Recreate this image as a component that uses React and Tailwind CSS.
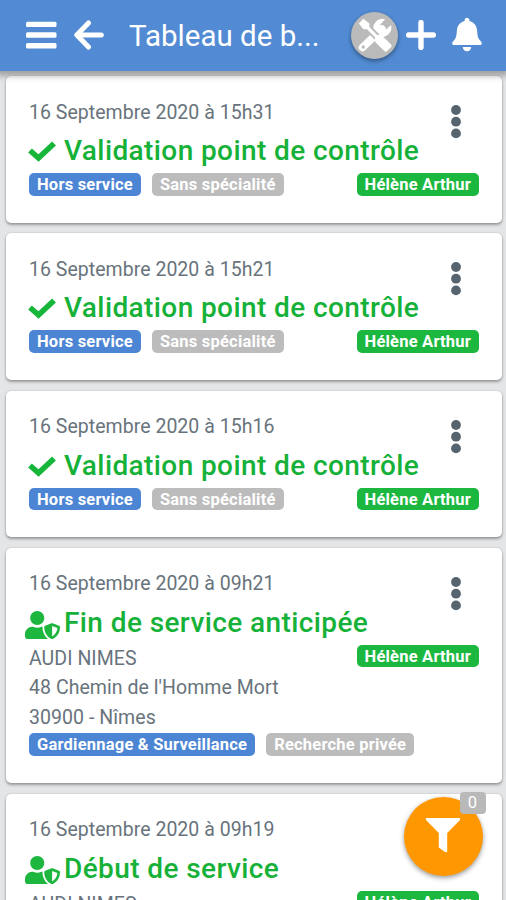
import React from "react";
import { FaUserShield } from "react-icons/fa";

function Badge({ color, children }) {
  return (
    <span className={`h-[22.5px] shrink-0 whitespace-nowrap rounded-[5px] px-2 text-[16.5px] leading-[23px] font-bold tracking-[0.21px] text-white ${color}`}>
      {children}
    </span>
  );
}

function Check() {
  return (
    <svg viewBox="0 0 28 21" className="mt-[1px] h-[21px] w-[28px]" fill="none">
      <path d="M2 9.5 10.5 17 26 2.5" stroke="#16b63a" strokeWidth="5.6" />
    </svg>
  );
}

function Tools() {
  return (
    <svg viewBox="0 0 34 34" className="-mt-[1px] h-[34px] w-[34px]">
      <path d="M4.5 29.5 24 11" stroke="white" strokeWidth="7.6" strokeLinecap="round" />
      <path d="M27.2 1.2A9.2 9.2 0 0 0 16 13.4L21 18.3A9.2 9.2 0 0 0 33 7L27.6 12L23.4 11.2L22.2 6.6Z" fill="white" />
      <path d="M6 6 21 21" stroke="#bababa" strokeWidth="7" />
      <path d="M5.4 0.8 11.4 5.4V9L19.4 17.2C21.3 16.3 23.3 16.7 24.8 18.2L33 26.4C33.8 27.2 33.8 28.5 33 29.3L29.2 33.1C28.4 33.9 27.1 33.9 26.3 33.1L18.1 24.9C16.7 23.5 16.3 21.3 17.2 19.5L9 11.3H5.4L0.8 5.4Z" fill="white" />
      <circle cx="5.2" cy="29" r="1.7" fill="#bababa" />
    </svg>
  );
}

function Dots() {
  return (
    <svg viewBox="0 0 10 34" className="mt-[29px] h-[34px] w-[10px] fill-[#56646f]">
      <circle cx="5" cy="5" r="4.9" />
      <circle cx="5" cy="16.7" r="4.9" />
      <circle cx="5" cy="28.4" r="4.9" />
    </svg>
  );
}

function Tags({ tags }) {
  return (
    <div className="flex gap-[11px]">
      <Badge color="bg-[#4c85d3]">{tags[0]}</Badge>
      <Badge color="bg-[#bcbcbc]">{tags[1]}</Badge>
    </div>
  );
}

function Card({ date, title, address, tags, height }) {
  const person = <Badge color="bg-[#1cb73f]">Hélène Arthur</Badge>;
  return (
    <article className={`flex shrink-0 flex-col rounded-[5px] bg-white px-[23px] shadow-[0_2px_3px_rgba(0,0,0,0.32),0_0_2px_rgba(0,0,0,0.18)] ${height}`}>
      <div className="flex h-[97px] justify-between pr-[18px]">
        <div className="flex flex-col pt-[24.6px]">
          <div className="h-[32.6px] text-[19.5px] leading-[24px] tracking-[0.03px] text-[#68737c]">{date}</div>
          <div className="flex h-[36px] items-center">
            {address ? (
              <FaUserShield className="mt-[3px] mr-[4px] -ml-[4px] h-[28px] w-[35px] shrink-0 text-[#1db63f]" />
            ) : (
              <span className="mr-[8px] -ml-[1px] shrink-0"><Check /></span>
            )}
            <h2 className="text-[28px] leading-[34px] font-medium tracking-[0.4px] whitespace-nowrap text-[#16b138]">{title}</h2>
          </div>
        </div>
        <Dots />
      </div>
      {address ? (
        <>
          <div className="flex h-[88.5px] items-start justify-between">
            <div className="-mt-px text-[19.5px] leading-[29.5px] tracking-[0.05px] text-[#68737c]">
              {address.map((line) => <div key={line}>{line}</div>)}
            </div>
            {person}
          </div>
          <Tags tags={tags} />
        </>
      ) : (
        <div className="flex justify-between">
          <Tags tags={tags} />
          {person}
        </div>
      )}
    </article>
  );
}

const address = ["AUDI NIMES", "48 Chemin de l'Homme Mort", "30900 - Nîmes"];
const service = ["Gardiennage & Surveillance", "Recherche privée"];
const control = ["Hors service", "Sans spécialité"];

export default function App() {
  return (
    <div className="relative flex h-[900px] w-[506px] flex-col overflow-hidden bg-[#e4e5e7] font-['Roboto',sans-serif]">
      <header className="z-10 flex h-[71px] shrink-0 items-center bg-[#528bd3] text-white shadow-[0_2px_6px_3px_rgba(0,0,0,0.3)]">
        <svg viewBox="0 0 31 28" className="-mt-[2px] ml-[26px] h-[28px] w-[31px] fill-white">
          <rect y="0.7" width="30.5" height="5.4" rx="1.5" />
          <rect y="11.3" width="30.5" height="5.4" rx="1.5" />
          <rect y="22" width="30.5" height="5.4" rx="1.5" />
        </svg>
        <svg viewBox="0 0 30 30" className="-mt-[2px] ml-[17px] h-[30px] w-[30px]" fill="none" stroke="white" strokeLinecap="round">
          <path d="M14.5 3 2.8 15 14.5 27" strokeWidth="5" strokeLinejoin="round" />
          <path d="M4 15H27.3" strokeWidth="5" />
        </svg>
        <h1 className="ml-[25px] w-[222px] text-[29.5px] leading-[40px] font-normal whitespace-nowrap">Tableau de b...</h1>
        <span className="flex h-[47px] w-[47px] shrink-0 items-center justify-center rounded-full bg-[#bababa] shadow-[0_2px_4px_rgba(0,0,0,0.4)]">
          <Tools />
        </span>
        <svg viewBox="0 0 30 30" className="-mt-[2px] ml-[8px] h-[30px] w-[30px]" fill="none" stroke="white">
          <path d="M15 2.6V27.4M2.6 15H27.4" strokeWidth="5.4" strokeLinecap="round" />
        </svg>
        <svg viewBox="0 0 30 35" className="-mt-[2px] ml-[16px] h-[35px] w-[30px] fill-white">
          <path d="M15 0.8C13.6 0.8 12.6 1.8 12.6 3.2V4.1C8.2 5.2 5.3 8.6 4.9 13.3C4.5 18.6 4.3 20.8 2.4 23C0.9 24.7 0.2 25.2 0.2 26.5C0.2 27.5 1 28.1 2 28.1H28C29 28.1 29.8 27.5 29.8 26.5C29.8 25.2 29.1 24.7 27.6 23C25.7 20.8 25.5 18.6 25.1 13.3C24.7 8.6 21.8 5.2 17.4 4.1V3.2C17.4 1.8 16.4 0.8 15 0.8Z" />
          <path d="M10.8 30H19.2C19.2 32.5 17.4 34.3 15 34.3C12.6 34.3 10.8 32.5 10.8 30Z" />
        </svg>
      </header>
      <main className="flex flex-col gap-[10.5px] pt-[5px] pr-[4px] pl-[6px]">
        <Card height="h-[146.8px]" date="16 Septembre 2020 à 15h31" title="Validation point de contrôle" tags={control} />
        <Card height="h-[146.8px]" date="16 Septembre 2020 à 15h21" title="Validation point de contrôle" tags={control} />
        <Card height="h-[146.8px]" date="16 Septembre 2020 à 15h16" title="Validation point de contrôle" tags={control} />
        <Card height="h-[235.3px]" date="16 Septembre 2020 à 09h21" title="Fin de service anticipée" address={address} tags={service} />
        <Card height="h-[235.3px]" date="16 Septembre 2020 à 09h19" title="Début de service" address={address} tags={service} />
      </main>
      <button className="absolute top-[796.5px] left-[403.5px] flex h-[79px] w-[79px] items-center justify-center rounded-full bg-[#ff9800] shadow-[0_2px_5px_rgba(0,0,0,0.4)]">
        <svg viewBox="0 0 34 34" className="-mt-[3px] h-[34px] w-[34px] fill-white">
          <path d="M0 0H34V2L21.2 15V34H19L12.8 29.5V15L0 2Z" />
        </svg>
        <span className="absolute -top-[5px] left-[56px] h-[22px] w-[26px] rounded-[4px] bg-[#b9b9b9] text-center text-[16.5px] leading-[22px] text-white">0</span>
      </button>
    </div>
  );
}
